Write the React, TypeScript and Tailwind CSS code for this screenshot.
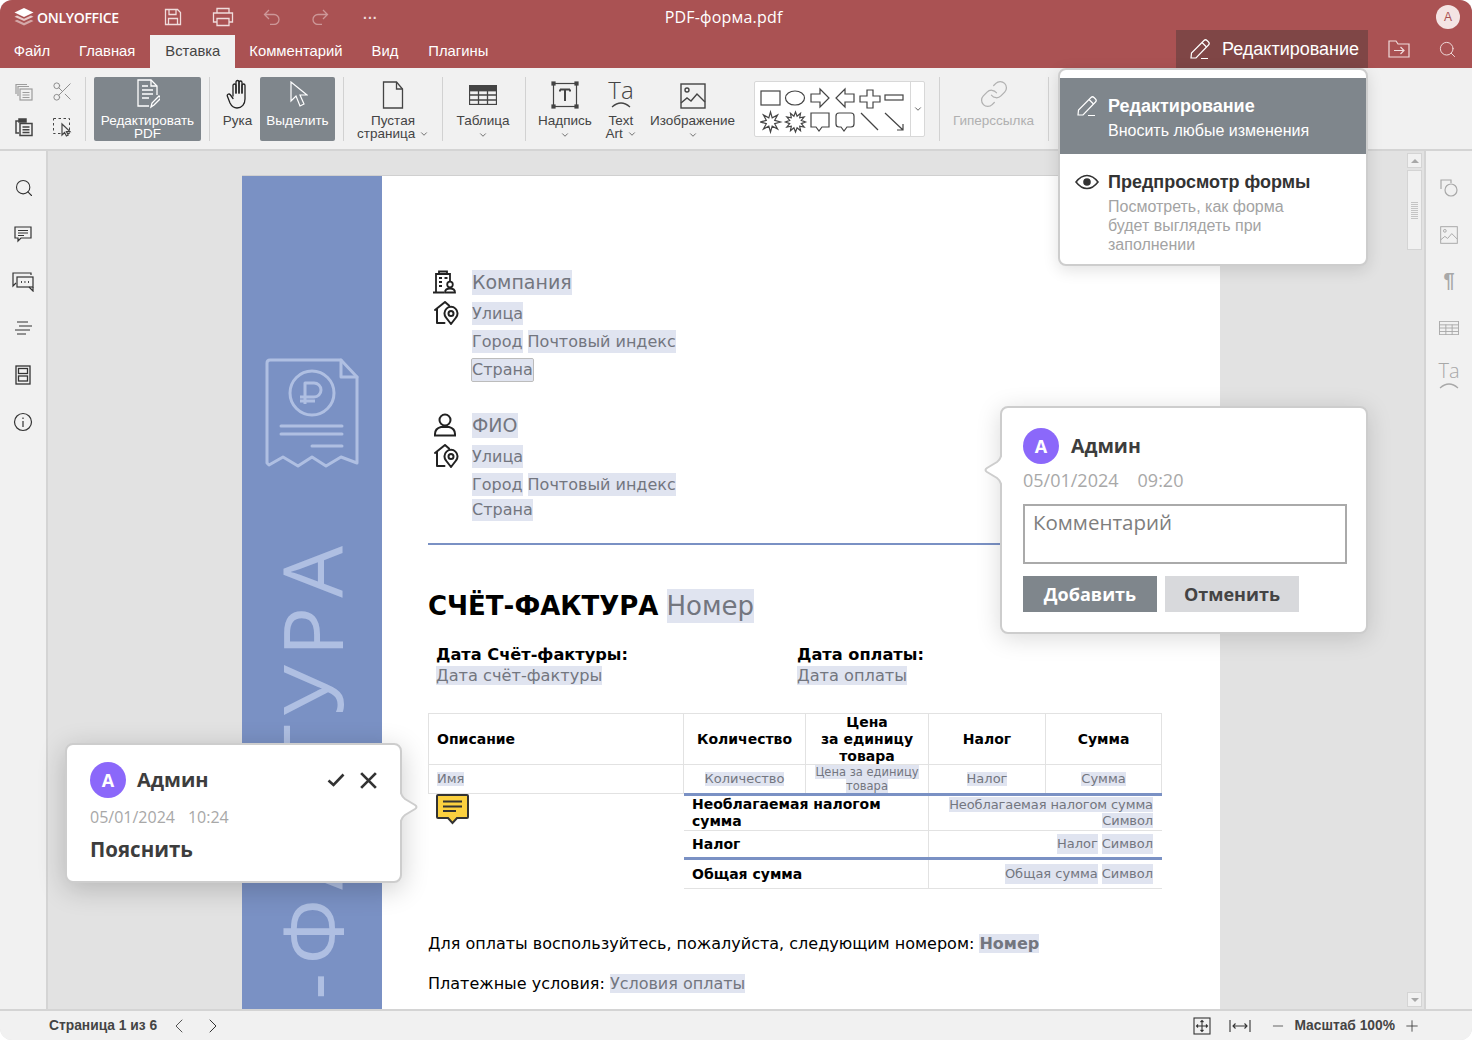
import { ReactNode } from "react";
import { ChevronDown, ChevronLeft, ChevronRight, Link, Minus, Plus, Scissors, Search } from "lucide-react";

const ICON = "#444444";

function starPoints(cx: number, cy: number, n: number, R: number, r: number) {
  const pts: string[] = [];
  for (let i = 0; i < n * 2; i++) {
    const a = (Math.PI * i) / n - Math.PI / 2;
    const d = i % 2 === 0 ? R : r;
    pts.push(`${(cx + d * Math.cos(a)).toFixed(1)},${(cy + d * Math.sin(a)).toFixed(1)}`);
  }
  return pts.join(" ");
}

function Svg({ size = 24, w, h, vb, color = ICON, sw = 1.2, children }: { size?: number; w?: number; h?: number; vb: string; color?: string; sw?: number; children: ReactNode }) {
  return (
    <svg width={w ?? size} height={h ?? size} viewBox={vb} fill="none" stroke={color} strokeWidth={sw}>
      {children}
    </svg>
  );
}

function CopyIcon({ color = ICON }: { color?: string }) {
  return (
    <Svg size={20} vb="0 0 20 20" color={color}>
      <path d="M2 12V2.5h11M4 14V4.5h11" />
      <rect x="6" y="7" width="12" height="11" fill="#f1f1f1" />
      <path d="M8.5 10.5h7M8.5 13h7M8.5 15.5h7" />
    </Svg>
  );
}

function PasteIcon() {
  return (
    <Svg size={20} vb="0 0 20 20" sw={1.5}>
      <path d="M5 4H2v12h3" />
      <rect x="5" y="2" width="7" height="3" fill={ICON} />
      <rect x="6" y="6.5" width="12" height="12" fill="#f1f1f1" />
      <path d="M8.5 10h7M8.5 12.7h7M8.5 15.4h7" />
    </Svg>
  );
}

function SelectAllIcon() {
  return (
    <svg width="20" height="20" viewBox="0 0 20 20" fill="none" stroke={ICON}>
      <rect x="1.5" y="1.5" width="16" height="15" strokeDasharray="2.5 2.5" />
      <path d="M10 7v11l2.6-2.5 1.8 3.5 1.8-1-1.8-3.4H18z" fill="#f1f1f1" strokeWidth="1.2" />
    </svg>
  );
}

function EditPdfIcon() {
  return (
    <Svg w={24} h={30} vb="0 0 24 30" color="#ffffff" sw={1.3}>
      <path d="M13 27H2V1h13l6 6v9" />
      <path d="M15 1v6h6M6 7h6M6 11h11M6 15h11M6 19h7" />
      <path d="M15 28l1-4 7-7 2 2-7 7z" fill="#7f868c" />
    </Svg>
  );
}

function CursorIcon({ color = "#ffffff" }: { color?: string }) {
  return (
    <Svg w={20} h={28} vb="0 0 20 28" color={color} sw={1.2}>
      <path d="M3 1v19l5-5 4 10 4-2-4-9h7z" />
    </Svg>
  );
}

function HandIcon() {
  return (
    <svg width="24" height="30" viewBox="0 0 24 30" fill="none" stroke="#222222" strokeWidth="1.3" strokeLinecap="round" strokeLinejoin="round">
      <path d="M7 17V6.500a1.500 1.500 0 0 1 3 0V14" />
      <path d="M10 14V3a1.500 1.500 0 0 1 3 0v11" />
      <path d="M13 14V3.500a1.500 1.500 0 0 1 3 0V14" />
      <path d="M16 14V6.500a1.500 1.500 0 0 1 3 0V20c0 5-3 9-8 9-4 0-5.500-2-7-5L1.500 17.500c-1-2 1.500-3.500 3-1.500L7 19.500" />
    </svg>
  );
}

function PageIcon() {
  return (
    <Svg w={22} h={28} vb="0 0 22 28" sw={1.3}>
      <path d="M1.5 1h13l6 7v19h-19z" />
      <path d="M14.5 1v7h6" />
    </Svg>
  );
}

function TableIcon({ color = ICON, head = true, w = 28, h = 20 }: { color?: string; head?: boolean; w?: number; h?: number }) {
  return (
    <Svg w={w} h={h} vb="0 0 28 20" color={color} sw={1.3}>
      <rect x="0.5" y="0.5" width="27" height="19" />
      {head && <rect x="0.5" y="0.5" width="27" height="5" fill={color} />}
      <path d="M0.5 10h27M0.5 15h27M9.5 5v15M18.5 5v15M0.5 5.5h27" />
    </Svg>
  );
}

function TextBoxIcon() {
  return (
    <svg width="28" height="28" viewBox="0 0 28 28" fill="none" stroke={ICON} strokeWidth="1.2">
      <rect x="2.5" y="2.5" width="23" height="23" />
      <path d="M9 8.5h10M9 8.5v2M19 8.5v2M14 8.5v11.5" strokeWidth="2" />
      <g fill={ICON}>
        <rect x="1" y="1" width="3" height="3" />
        <rect x="24" y="1" width="3" height="3" />
        <rect x="1" y="24" width="3" height="3" />
        <rect x="24" y="24" width="3" height="3" />
      </g>
    </svg>
  );
}

function TextArtIcon({ color = ICON, size = "text-[24px]" }: { color?: string; size?: string }) {
  return (
    <div className="flex flex-col items-center h-[30px]">
      <span className={`font-['Open_Sans',sans-serif] font-light leading-[22px] ${size}`}>Ta</span>
      <svg width="20" height="7" viewBox="0 0 20 7" fill="none" stroke={color} strokeWidth="1.2">
        <path d="M1 6Q10-2 19 6" />
      </svg>
    </div>
  );
}

function ImageIcon({ color = ICON, s = 26 }: { color?: string; s?: number }) {
  return (
    <Svg size={s} vb="0 0 26 26" color={color} sw={1.4}>
      <rect x="1" y="1" width="24" height="24" />
      <circle cx="7" cy="7" r="2" />
      <path d="M1 20l6-5 4 3 6-7 8 8" />
    </Svg>
  );
}

function ShapesIcon() {
  return (
    <svg width="150" height="50" viewBox="0 0 150 50" fill="none" stroke="#444444" strokeWidth="1.2">
      <g transform="translate(0 3)">
        <rect x="1" y="3" width="19" height="14" />
        <ellipse cx="35" cy="10" rx="9.5" ry="7" />
        <path d="M51 6h9V1l9 9-9 9v-5h-9z" />
        <path d="M94 6h-9V1l-9 9 9 9v-5h9z" />
        <path d="M107 2h6v6h7v6h-7v6h-6v-6h-7V8h7z" />
        <rect x="125" y="7" width="18" height="5" />
      </g>
      <polygon points={starPoints(10.5, 37, 8, 10, 4.5)} />
      <polygon points={starPoints(35.5, 37, 12, 10, 6)} />
      <path d="M51 28h18v14h-7l-3 4-3-4h-5z" />
      <path d="M79 28h12q3 0 3 3v8q0 3-3 3h-4l-3 4-3-4h-2q-3 0-3-3v-8q0-3 3-3z" />
      <path d="M101 28l17 17" />
      <path d="M125 28l18 17M143 39v6h-6" />
    </svg>
  );
}

function PencilIcon() {
  return (
    <svg width="22" height="22" viewBox="0 0 22 22" fill="none" stroke="#ffffff" strokeWidth="1.2">
      <path d="M2 20l.5-5L15 2.5q1.500-1.500 3 0l1.500 1.500q1.500 1.500 0 3L7 20z" />
      <path d="M13 4.500l4.500 4.500M12 20.500h7" />
    </svg>
  );
}

function LogoIcon() {
  return (
    <svg width="20" height="18" viewBox="0 0 20 18">
      <path d="M10 0l9.500 4.500L10 9 .5 4.500z" fill="#ffffff" />
      <path d="M3 7.500l-2.500 1.200L10 13l9.500-4.300L17 7.500 10 10.700z" fill="#e6caca" />
      <path d="M3 11.800L.5 13l9.500 4.500 9.500-4.500-2.500-1.200L10 15z" fill="#d4a8a8" />
    </svg>
  );
}

function HomeIcon() {
  return (
    <svg width="26" height="24" viewBox="0 0 26 24" fill="none" stroke="#222222" strokeWidth="2" strokeLinejoin="round" strokeLinecap="round">
      <path d="M1 9l10-8 4 3.500M3 8v14h7.500" />
      <path d="M17 23l-5-6.500a6.500 6.500 0 1 1 10 0z" />
      <circle cx="17" cy="12.500" r="2.500" />
    </svg>
  );
}

function CompanyIcon() {
  return (
    <svg width="24" height="24" viewBox="0 0 24 24" fill="none" stroke="#222222" strokeWidth="1.800">
      <path d="M3 21.500V4h14v8M6 4V1.500h8V4M0 22.500h11" />
      <path d="M6 8h3M6 12h3M6 16h3M11.500 8h3" />
      <circle cx="17" cy="14.500" r="2.800" />
      <path d="M12 22.500q0-4 5-4t5 4z" />
    </svg>
  );
}

function UserIcon() {
  return (
    <svg width="24" height="24" viewBox="0 0 24 24" fill="none" stroke="#222222" strokeWidth="2">
      <circle cx="12" cy="7" r="5.500" />
      <path d="M2 22.500v-1.500q0-5.500 6-7h8q6 1.500 6 7v1.500z" />
    </svg>
  );
}

function ReceiptIcon() {
  return (
    <svg width="96" height="112" viewBox="0 0 96 112" fill="none" stroke="#afbfe2" strokeWidth="3" strokeLinejoin="round" strokeLinecap="round">
      <path d="M3 106V6q0-3 3-3h71l16 17v86l-16-6-15 9-14-9-14 9-15-9-14 8z" />
      <path d="M77 3v17h16" />
      <circle cx="48" cy="36" r="22" />
      <path d="M41 47V26h9a7 7 0 0 1 0 14H36M36 44h15" strokeLinecap="butt" />
      <path d="M17 69h61M17 77h61M48 89h30" />
    </svg>
  );
}

function Sep({ className }: { className: string }) {
  return <div className={`w-px h-[64px] bg-[#d2d2d2] shrink-0 ${className}`} />;
}

function Caret({ inline }: { inline?: boolean }) {
  return <ChevronDown size={10} strokeWidth={1.800} className={inline ? "inline" : "mt-[3px]"} />;
}

function ToolBtn({ className, icon, label, active, disabled, caret }: { className: string; icon: ReactNode; label: ReactNode; active?: boolean; disabled?: boolean; caret?: boolean }) {
  return (
    <div className={`shrink-0 h-[64px] flex flex-col items-center rounded-[2px] ${active ? "bg-[#7f868c] text-white" : disabled ? "text-[#b0b0b0]" : "text-[#444444]"} ${className}`}>
      <div className="h-[32px] flex items-end justify-center shrink-0">{icon}</div>
      <div className="text-center text-[13.500px] leading-[13px] mt-[5px] whitespace-nowrap">{label}</div>
      {caret && <Caret />}
    </div>
  );
}

function Ph({ children, className = "" }: { children: ReactNode; className?: string }) {
  return <span className={`bg-[#e0e4f0] text-[#73767f] ${className}`}>{children}</span>;
}

function AddressLines({ lastBox }: { lastBox?: boolean }) {
  return (
    <>
      <div className="flex items-center h-[28px] mt-[3px]">
        <div className="w-[44px] pl-[6px] shrink-0"><HomeIcon /></div>
        <Ph className="text-[16px] leading-[23px]">Улица</Ph>
      </div>
      <div className="pl-[44px] text-[16px] leading-[23px] flex gap-[5px] h-[29px] items-center">
        <Ph>Город</Ph>
        <Ph>Почтовый индекс</Ph>
      </div>
      <div className={`pl-[44px] text-[16px] leading-[22px] flex items-center ${lastBox ? "h-[28px]" : "h-[22px]"}`}>
        <Ph className={lastBox ? "outline outline-1 outline-[#bcbcbc] rounded-[1px]" : ""}>Страна</Ph>
      </div>
    </>
  );
}

function Cell({ children, className = "" }: { children: ReactNode; className?: string }) {
  return <div className={`flex items-center justify-center text-center border-r border-[#e2e2e2] last:border-r-0 ${className}`}>{children}</div>;
}

function Avatar() {
  return (
    <div className="w-[36px] h-[36px] rounded-full bg-[#8b68fa] text-white flex items-center justify-center text-[18px] font-bold shrink-0">А</div>
  );
}

function Arrow({ flip }: { flip?: boolean }) {
  return (
    <svg width="18" height="36" viewBox="0 0 18 36" className={flip ? "-scale-x-100" : ""} fill="#ffffff" stroke="#cdcdcd" strokeWidth="2">
      <path d="M0 0q1 7 5 10l10 6q3 2 0 4L5 26q-4 3-5 10" />
    </svg>
  );
}

export default function App() {
  return (
    <div className="relative w-[1472px] h-[1040px] overflow-hidden rounded-[12px] flex flex-col font-['Liberation_Sans',Arial,sans-serif] text-[#444444] bg-[#e2e2e2]">
      {/* Header */}
      <div className="bg-[#aa5253] h-[68px] shrink-0 text-white">
        <div className="h-[30px] pt-[4px] flex items-center">
          <div className="ml-[14px] flex items-center gap-[3px] w-[150px]">
            <LogoIcon />
            <span className="text-[14px] font-semibold tracking-[-0.3px] font-['Open_Sans',sans-serif]">ONLYOFFICE</span>
          </div>
          <div className="flex items-center text-[#f0dcdc]">
            <svg width="18" height="18" viewBox="0 0 18 18" fill="none" stroke="currentColor" strokeWidth="1.300">
              <path d="M1.500 1.500h12l3 3v12h-15zM5 1.500v5h7v-5M4.500 16.500v-6h9v6" />
            </svg>
            <svg width="22" height="20" viewBox="0 0 22 20" className="ml-[30px]" fill="none" stroke="currentColor" strokeWidth="1.300">
              <path d="M5 6V1.500h12V6M5 15H1.500V6h19v9H17M5 11.500h12v7H5z" />
            </svg>
            <svg width="18" height="16" viewBox="0 0 18 16" className="ml-[29px] opacity-50" fill="none" stroke="currentColor" strokeWidth="1.300">
              <path d="M6 1L1.500 5.500 6 10M1.500 5.500H11a5 5 0 0 1 0 10H7" />
            </svg>
            <svg width="18" height="16" viewBox="0 0 18 16" className="ml-[30px] opacity-50" fill="none" stroke="currentColor" strokeWidth="1.300">
              <path d="M12 1l4.500 4.500L12 10M16.500 5.500H7a5 5 0 0 0 0 10h4" />
            </svg>
            <span className="ml-[34px] text-[14px] leading-none tracking-[1px] -mt-[6px] font-bold">...</span>
          </div>
          <span className="ml-[287px] text-[16px] font-['Open_Sans',sans-serif] tracking-[0.2px]">PDF-форма.pdf</span>
          <div className="ml-auto mr-[12px] w-[24px] h-[24px] rounded-full bg-[#f4e4e4] text-[#aa5253] text-[12px] flex items-center justify-center">А</div>
        </div>
        <div className="h-[38px] flex items-end text-[14.800px]">
          <div className="w-[64px] h-[33px] flex items-center justify-center">Файл</div>
          <div className="px-[15px] h-[33px] flex items-center">Главная</div>
          <div className="px-[15px] h-[33px] flex items-center bg-[#f1f1f1] text-[#444444]">Вставка</div>
          <div className="px-[14px] h-[33px] flex items-center">Комментарий</div>
          <div className="px-[15px] h-[33px] flex items-center">Вид</div>
          <div className="px-[15px] h-[33px] flex items-center">Плагины</div>
          <div className="ml-auto w-[192px] h-[38px] bg-[#7f4646] flex items-center pl-[13px] gap-[11px] text-[18px]">
            <PencilIcon />
            <span>Редактирование</span>
          </div>
          <div className="w-[104px] h-[38px] flex items-center pl-[20px] gap-[28px]">
            <svg width="22" height="18" viewBox="0 0 22 18" fill="none" stroke="#f0dcdc" strokeWidth="1.200">
              <path d="M1 17V1h7l2 3h11v13zM6 10.500h10M12.500 7l3.500 3.500-3.500 3.500" />
            </svg>
            <Search size={19} strokeWidth={1.200} className="text-[#f0dcdc]" />
          </div>
        </div>
      </div>

      {/* Toolbar */}
      <div className="bg-[#f1f1f1] h-[83px] shrink-0 border-b-2 border-[#d4d4d4] flex pt-[9px] items-start">
        <div className="ml-[14px] w-[66px] shrink-0 grid grid-cols-2 gap-y-[15px] pt-[5px]">
          <CopyIcon color="#9d9d9d" />
          <Scissors size={23} strokeWidth={1} className="text-[#8a8a8a] ml-[4px] -mt-[2px] -mb-[1px]" />
          <PasteIcon />
          <div className="ml-[5px]"><SelectAllIcon /></div>
        </div>
        <Sep className="ml-[5px]" />
        <ToolBtn className="ml-[8px] w-[107px]" active icon={<EditPdfIcon />} label={<>Редактировать<br />PDF</>} />
        <Sep className="ml-[8px]" />
        <ToolBtn className="ml-[8px] w-[39px]" icon={<HandIcon />} label="Рука" />
        <ToolBtn className="ml-[3px] w-[75px]" active icon={<CursorIcon />} label="Выделить" />
        <Sep className="ml-[8px]" />
        <ToolBtn className="ml-[8px] w-[82px]" icon={<PageIcon />} label={<>Пустая<br />страница <Caret inline /></>} />
        <Sep className="ml-[8px]" />
        <ToolBtn className="ml-[7px] w-[66px]" caret icon={<div className="pb-[4px]"><TableIcon /></div>} label="Таблица" />
        <Sep className="ml-[9px]" />
        <ToolBtn className="ml-[8px] w-[62px]" caret icon={<TextBoxIcon />} label="Надпись" />
        <ToolBtn className="ml-[8px] w-[34px]" icon={<TextArtIcon />} label={<>Text<br />Art <Caret inline /></>} />
        <ToolBtn className="ml-[7px] w-[95px]" caret icon={<ImageIcon />} label="Изображение" />
        <div className="ml-[14px] w-[171px] h-[56px] mt-[4px] bg-white border border-[#d8d8d8] rounded-[2px] flex shrink-0">
          <div className="flex-1 pl-[5px] pt-[3px]"><ShapesIcon /></div>
          <div className="w-[16px] border-l border-[#d8d8d8] flex items-center justify-center">
            <ChevronDown size={10} strokeWidth={2} />
          </div>
        </div>
        <Sep className="ml-[14px]" />
        <ToolBtn className="ml-[7px] w-[93px]" disabled icon={<Link size={30} strokeWidth={1} />} label="Гиперссылка" />
        <Sep className="ml-[8px]" />
      </div>

      {/* Main */}
      <div className="flex flex-1 min-h-0">
        <div className="w-[48px] shrink-0 bg-[#f1f1f1] border-r-2 border-[#d4d4d4] flex flex-col items-center text-[#333333]">
          <Search size={20} strokeWidth={1.300} className="mt-[27px] -mr-[1px]" />
          <svg width="18" height="18" viewBox="0 0 18 18" className="mt-[27px]" fill="none" stroke="currentColor" strokeWidth="1.200">
            <path d="M1 2h16v11H7l-3 3v-3H1zM4 5.500h10M4 8h10M4 10.500h6" />
          </svg>
          <svg width="22" height="20" viewBox="0 0 22 20" className="mt-[29px]" fill="none" stroke="currentColor" strokeWidth="1.200">
            <path d="M1 11V1h18v2M1 11v3l3-3" />
            <rect x="5" y="5" width="16" height="10" />
            <path d="M21 15v4l-4-4" />
            <path d="M9 10h.9M12.500 10h.9M16 10h.9" strokeWidth="2" />
          </svg>
          <svg width="18" height="14" viewBox="0 0 18 14" className="mt-[29px]" fill="none" stroke="currentColor" strokeWidth="1.200">
            <path d="M3 1h11M5 5h13M1 9h15M3 13h9" />
          </svg>
          <svg width="16" height="20" viewBox="0 0 16 20" className="mt-[30px]" fill="none" stroke="currentColor" strokeWidth="1.300">
            <rect x="1" y="1" width="14" height="18" />
            <rect x="3.500" y="3.500" width="9" height="5" />
            <rect x="3.500" y="11" width="9" height="5" />
          </svg>
          <svg width="20" height="20" viewBox="0 0 20 20" className="mt-[27px]" fill="none" stroke="currentColor" strokeWidth="1.200">
            <circle cx="10" cy="10" r="8.500" />
            <path d="M10 9v6M10 5.500v1.500" />
          </svg>
        </div>

        <div className="flex-1 min-w-0 flex pl-[194px] pt-[24px] overflow-hidden">
          <div className="w-[978px] shrink-0 flex bg-white border-t border-[#d0d0d0] font-['DejaVu_Sans',sans-serif] text-black">
            {/* Blue band */}
            <div className="w-[140px] shrink-0 bg-[#7a91c4] overflow-hidden flex flex-col items-center">
              <div className="mt-[181px] shrink-0"><ReceiptIcon /></div>
              <div className="mt-[68px] -ml-[2px] shrink-0 [writing-mode:vertical-rl] rotate-180 text-[82px] leading-[82px] tracking-[9px] text-[#afbfe2] font-['Open_Sans',sans-serif] whitespace-nowrap">СЧЁТ-ФАКТУРА</div>
            </div>
            {/* Page body */}
            <div className="flex-1 min-w-0 pl-[46px] pr-[58px] pt-[92px]">
              <div className="flex items-center h-[28px]">
                <div className="w-[44px] pl-[5px] shrink-0"><CompanyIcon /></div>
                <Ph className="text-[19px] leading-[25px]">Компания</Ph>
              </div>
              <AddressLines lastBox />
              <div className="flex items-center h-[28px] mt-[27px]">
                <div className="w-[44px] pl-[5px] shrink-0"><UserIcon /></div>
                <Ph className="text-[19px] leading-[25px]">ФИО</Ph>
              </div>
              <AddressLines />
              <div className="h-[2px] bg-[#7a91c4] mt-[22px]" />
              <div className="mt-[43px] h-[36px] flex items-center text-[26px] gap-[8px]">
                <span className="font-bold leading-none">СЧЁТ-ФАКТУРА</span>
                <Ph className="leading-[34px]">Номер</Ph>
              </div>
              <div className="mt-[20px] pl-[8px] grid grid-cols-[361px_1fr] text-[16.200px] leading-[21px]">
                <div>
                  <div className="font-bold">Дата Счёт-фактуры:</div>
                  <Ph>Дата счёт-фактуры</Ph>
                </div>
                <div>
                  <div className="font-bold">Дата оплаты:</div>
                  <Ph>Дата оплаты</Ph>
                </div>
              </div>
              {/* Items table */}
              <div className="mt-[27px] border border-[#e2e2e2]">
                <div className="grid grid-cols-[255px_122px_123px_117px_1fr] h-[51px] border-b border-[#e2e2e2] font-bold text-[14px] leading-[17px]">
                  <Cell className="!justify-start pl-[8px]">Описание</Cell>
                  <Cell>Количество</Cell>
                  <Cell>Цена<br />за единицу<br />товара</Cell>
                  <Cell>Налог</Cell>
                  <Cell>Сумма</Cell>
                </div>
                <div className="grid grid-cols-[255px_122px_123px_117px_1fr] h-[28px] text-[13px] leading-[14px]">
                  <Cell className="!justify-start pl-[8px]"><Ph>Имя</Ph></Cell>
                  <Cell><Ph>Количество</Ph></Cell>
                  <Cell className="text-[11.500px] leading-[14px]"><div><Ph>Цена за единицу</Ph><br /><Ph>товара</Ph></div></Cell>
                  <Cell><Ph>Налог</Ph></Cell>
                  <Cell><Ph>Сумма</Ph></Cell>
                </div>
              </div>
              <div className="flex">
                <div className="w-[256px] shrink-0 pl-[8px]">
                  <svg width="33" height="31" viewBox="0 0 33 31" fill="#fbd03f" stroke="#333333" strokeWidth="2">
                    <path d="M2 1h29q1 0 1 1v21q0 1-1 1H21l-4.500 5-4.500-5H2q-1 0-1-1V2q0-1 1-1z" />
                    <path d="M7 7.500h19M7 12.500h19M7 17h13" />
                  </svg>
                </div>
                <div className="flex-1 border-t-[3px] border-[#7a91c4] -mt-[1px]">
                  <div className="grid grid-cols-[245px_1fr] h-[35px] border-b border-[#e2e2e2]">
                    <div className="pl-[8px] font-bold text-[14px] leading-[17px] border-r border-[#e2e2e2]">Необлагаемая налогом<br />сумма</div>
                    <div className="text-right pr-[9px] text-[13px] leading-[16px] tracking-[-0.1px] pt-[1px]"><Ph>Необлагаемая налогом сумма</Ph><br /><Ph>Символ</Ph></div>
                  </div>
                  <div className="grid grid-cols-[245px_1fr] h-[29px] border-b-[3px] border-[#7a91c4]">
                    <div className="pl-[8px] font-bold text-[14px] flex items-center border-r border-[#e2e2e2]">Налог</div>
                    <div className="flex items-center justify-end gap-[4px] pr-[9px] text-[13px]"><Ph>Налог</Ph><Ph>Символ</Ph></div>
                  </div>
                  <div className="grid grid-cols-[245px_1fr] h-[29px] border-b border-[#e2e2e2]">
                    <div className="pl-[8px] font-bold text-[14px] flex items-center border-r border-[#e2e2e2]">Общая сумма</div>
                    <div className="flex items-center justify-end gap-[4px] pr-[9px] text-[13px]"><Ph>Общая сумма</Ph><Ph>Символ</Ph></div>
                  </div>
                </div>
              </div>
              <div className="mt-[44px] text-[16px] leading-[22px]">
                Для оплаты воспользуйтесь, пожалуйста, следующим номером: <Ph className="font-bold">Номер</Ph>
              </div>
              <div className="mt-[18px] text-[16px] leading-[22px]">
                Платежные условия: <Ph>Условия оплаты</Ph>
              </div>
            </div>
          </div>
          {/* Scrollbar */}
          <div className="ml-auto w-[19px] shrink-0 -mt-[24px] p-[2px] flex flex-col">
            <div className="h-[15px] bg-[#f1f1f1] border border-[#d4d4d4] flex items-center justify-center shrink-0">
              <div className="w-0 h-0 border-l-[4px] border-r-[4px] border-b-[4px] border-l-transparent border-r-transparent border-b-[#a8a8a8]" />
            </div>
            <div className="h-[80px] mt-[2px] bg-[#f1f1f1] border border-[#d4d4d4] flex items-center justify-center shrink-0">
              <div className="w-[7px] h-[17px] bg-[repeating-linear-gradient(#c4c4c4_0,#c4c4c4_1px,transparent_1px,transparent_2px)]" />
            </div>
            <div className="flex-1" />
            <div className="h-[15px] bg-[#f1f1f1] border border-[#d4d4d4] flex items-center justify-center shrink-0">
              <div className="w-0 h-0 border-l-[4px] border-r-[4px] border-t-[4px] border-l-transparent border-r-transparent border-t-[#a8a8a8]" />
            </div>
          </div>
        </div>

        <div className="w-[48px] shrink-0 bg-[#f1f1f1] border-l-2 border-[#d4d4d4] flex flex-col items-center text-[#a8a8a8]">
          <svg width="18" height="18" viewBox="0 0 18 18" className="mt-[28px]" fill="none" stroke="currentColor" strokeWidth="1.200">
            <path d="M1 10V1h10v3" />
            <circle cx="11" cy="11" r="6" />
          </svg>
          <div className="mt-[29px]"><ImageIcon color="#a8a8a8" s={18} /></div>
          <span className="mt-[24px] text-[20px] leading-[24px] font-bold">¶</span>
          <div className="mt-[29px]"><TableIcon color="#a8a8a8" head={false} w={20} h={14} /></div>
          <div className="mt-[25px]"><TextArtIcon color="#a8a8a8" size="text-[20px]" /></div>
        </div>
      </div>

      {/* Status bar */}
      <div className="h-[31px] shrink-0 bg-[#f1f1f1] border-t-2 border-[#d4d4d4] flex items-center text-[13.800px] font-bold">
        <span className="ml-[49px] mt-[2px]">Страница 1 из 6</span>
        <ChevronLeft size={24} strokeWidth={1} className="ml-[10px] text-[#555555]" />
        <ChevronRight size={24} strokeWidth={1} className="ml-[10px] text-[#333333]" />
        <div className="ml-auto flex items-center mr-[51px]">
          <svg width="18" height="18" viewBox="0 0 18 18" fill="none" stroke="#333333" strokeWidth="1.100">
            <rect x="1" y="1" width="16" height="16" />
            <path d="M9 3.500v11M3.500 9h11M7.500 5L9 3.500 10.500 5M7.500 13L9 14.500 10.500 13M5 7.500L3.500 9 5 10.500M13 7.500L14.500 9 13 10.500" />
          </svg>
          <svg width="22" height="14" viewBox="0 0 22 14" className="ml-[18px]" fill="none" stroke="#333333" strokeWidth="1.100">
            <path d="M1 1v12M21 1v12M4 7h14M6.500 4.500L4 7l2.500 2.500M15.500 4.500L18 7l-2.500 2.500" />
          </svg>
          <Minus size={16} strokeWidth={1.100} className="ml-[19px] text-[#333333]" />
          <span className="ml-[8px] mt-[2px] text-[#444444]">Масштаб 100%</span>
          <Plus size={18} strokeWidth={1.100} className="ml-[8px] text-[#333333]" />
        </div>
      </div>

      {/* Mode dropdown */}
      <div className="absolute left-[1058px] top-[68px] w-[310px] h-[198px] bg-white border-2 border-[#cdcdcd] rounded-[8px] overflow-hidden pt-[8px] shadow-[0_4px_16px_rgba(0,0,0,0.12)]">
        <div className="h-[76px] bg-[#7f868c] text-white flex">
          <div className="w-[48px] pl-[16px] pt-[17px] shrink-0"><PencilIcon /></div>
          <div>
            <div className="text-[18px] font-bold leading-[20px] mt-[18px]">Редактирование</div>
            <div className="text-[16px] leading-[18px] mt-[6px]">Вносить любые изменения</div>
          </div>
        </div>
        <div className="flex">
          <div className="w-[48px] pl-[15px] pt-[20px] shrink-0">
            <svg width="24" height="16" viewBox="0 0 24 16" fill="none" stroke="#333333" strokeWidth="1.600">
              <path d="M1 8q5-6.500 11-6.500T23 8q-5 6.500-11 6.500T1 8z" />
              <circle cx="12" cy="8" r="3" fill="#333333" />
            </svg>
          </div>
          <div>
            <div className="text-[18px] font-bold leading-[20px] mt-[18px] text-[#333333]">Предпросмотр формы</div>
            <div className="text-[16px] leading-[19px] mt-[5px] text-[#a3a3a3]">Посмотреть, как форма<br />будет выглядеть при<br />заполнении</div>
          </div>
        </div>
      </div>

      {/* New comment card */}
      <div className="absolute left-[1000px] top-[406px] w-[368px] h-[228px] bg-white border-2 border-[#cdcdcd] rounded-[8px] shadow-[0_4px_24px_rgba(0,0,0,0.15)] font-['Open_Sans',sans-serif] pl-[21px] pt-[20px]">
        <div className="absolute -left-[18px] top-[44px]"><Arrow flip /></div>
        <div className="flex items-center gap-[12px]">
          <Avatar />
          <span className="text-[19.500px] font-bold text-[#3d3d3d]">Админ</span>
        </div>
        <div className="text-[18px] leading-[24px] text-[#a8a8a8] mt-[4px]">05/01/2024<span className="ml-[19px]">09:20</span></div>
        <div className="w-[324px] h-[60px] border-2 border-[#aaaaaa] mt-[12px] px-[8px] text-[20.500px] leading-[32px] text-[#7e7e7e]">Комментарий</div>
        <div className="flex gap-[8px] mt-[12px]">
          <div className="w-[134px] h-[36px] bg-[#7f868c] text-white text-[18px] font-bold flex items-center justify-center">Добавить</div>
          <div className="w-[134px] h-[36px] bg-[#d8d9dc] text-[#444444] text-[18px] font-bold flex items-center justify-center">Отменить</div>
        </div>
      </div>

      {/* Resolved comment card */}
      <div className="absolute left-[65px] top-[743px] w-[337px] h-[140px] bg-white border-2 border-[#cdcdcd] rounded-[8px] shadow-[0_6px_28px_rgba(0,0,0,0.2)] font-['Open_Sans',sans-serif] pl-[23px] pt-[17px]">
        <div className="absolute -right-[18px] top-[44px]"><Arrow /></div>
        <div className="flex items-center">
          <Avatar />
          <span className="ml-[11px] text-[20px] font-bold text-[#3d3d3d]">Админ</span>
          <svg width="18" height="14" viewBox="0 0 18 14" className="ml-[118px]" fill="none" stroke="#333333" strokeWidth="2.600">
            <path d="M1.500 7.500l5 4.500L16.500 1.500" />
          </svg>
          <svg width="17" height="17" viewBox="0 0 15 15" className="ml-[15px]" fill="none" stroke="#333333" strokeWidth="2.400">
            <path d="M1 1l13 13M14 1L1 14" />
          </svg>
        </div>
        <div className="text-[16px] leading-[22px] text-[#a8a8a8] mt-[8px]">05/01/2024<span className="ml-[13px]">10:24</span></div>
        <div className="text-[20.500px] font-bold leading-[30px] text-[#3d3d3d] mt-[6px]">Пояснить</div>
      </div>
    </div>
  );
}
